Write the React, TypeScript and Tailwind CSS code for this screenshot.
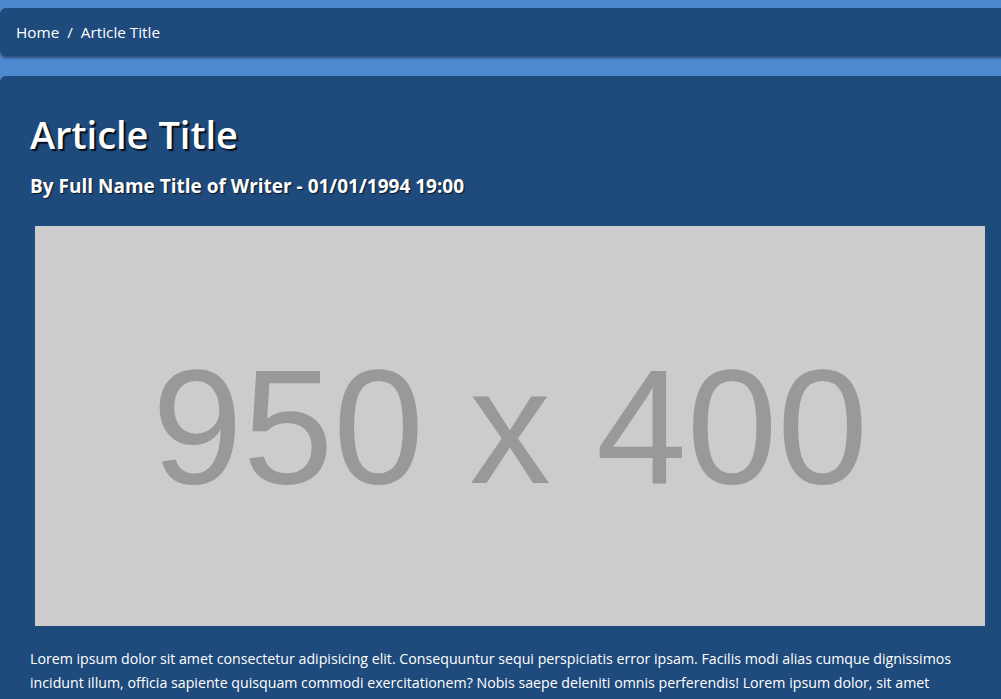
export default function App() {
  return (
    <div
      className="h-[699px] w-full overflow-hidden bg-[#4d89d1] pt-2"
      style={{ fontFamily: '"Open Sans", "Noto Sans", sans-serif' }}
    >
      <nav className="w-[1020px] h-12 bg-[#1f4a7c] rounded-md shadow-[0_2px_3px_rgba(0,0,0,0.45)] px-4 flex items-center text-[15.3px] text-white">
        <span>Home</span>
        <span className="mx-2">/</span>
        <span>Article Title</span>
      </nav>

      <article className="mt-5 w-[1020px] bg-[#1f4a7c] rounded-md px-[30px] pt-[30px] pb-8">
        <h1 className="text-[38px] leading-[56px] font-semibold text-white [text-shadow:2px_2px_1px_rgba(0,0,0,0.8)]">
          Article Title
        </h1>
        <h2 className="mt-[12px] text-[19px] leading-6 font-bold text-white [text-shadow:1px_1px_1px_rgba(0,0,0,0.7)]">
          By Full Name Title of Writer - 01/01/1994 19:00
        </h2>
        <div
          className="mt-[28px] ml-[5px] w-[950px] h-[400px] bg-[#cccccc] flex items-center justify-center text-[#999999] text-[163px] leading-none"
          style={{ fontFamily: '"Liberation Sans", Arial, sans-serif' }}
        >
          950 x 400
        </div>
        <p className="mt-[21px] w-[945px] text-[14.2px] leading-6 text-white">
          Lorem ipsum dolor sit amet consectetur adipisicing elit. Consequuntur sequi perspiciatis error ipsam. Facilis modi alias cumque dignissimos incidunt illum, officia sapiente quisquam commodi exercitationem? Nobis saepe deleniti omnis perferendis! Lorem ipsum dolor, sit amet consectetur adipisicing elit. Quos, voluptatum.
        </p>
      </article>
    </div>
  );
}
